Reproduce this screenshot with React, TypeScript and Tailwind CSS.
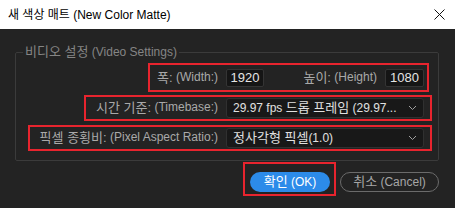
import React from "react";

const RED = "border-[#e8242e]";

const Ko = ({ children, className = "text-[13px]" }: { children: React.ReactNode; className?: string }) => (
  <span className={className}>{children}</span>
);

const Chevron = () => (
  <svg width="9" height="6" viewBox="0 0 9 6" className="shrink-0">
    <path d="M1 1 L4.5 4.5 L8 1" fill="none" stroke="#a0a0a0" strokeWidth="1" />
  </svg>
);

const NumberBox = ({ value, width }: { value: string; width: string }) => (
  <div
    className={`${width} h-[18px] bg-[#151515] border border-[#343434] rounded-[2px] flex items-center justify-center text-[13px] text-[#e4e4e4]`}
  >
    {value}
  </div>
);

const Dropdown = ({ children }: { children: React.ReactNode }) => (
  <div className="w-[198px] h-[20px] bg-[#181818] border border-[#303030] rounded-[3px] flex items-center justify-between pl-[6px] pr-[6px] text-[#e0e0e0]">
    <span className="whitespace-nowrap overflow-hidden leading-[18px]">{children}</span>
    <Chevron />
  </div>
);

export default function App() {
  return (
    <div className="w-[455px] h-[208px] bg-[#232323] flex flex-col overflow-hidden font-['Liberation_Sans','Noto_Sans_CJK_KR',sans-serif] text-[12px]">
      {/* title bar */}
      <div className="h-[29px] bg-white flex items-center justify-between pl-[8px] pr-[10px] shrink-0">
        <span className="text-[12px] text-black">새 색상 매트 (New Color Matte)</span>
        <svg width="11" height="11" viewBox="0 0 11 11">
          <path d="M0.5 0.5 L10.5 10.5 M10.5 0.5 L0.5 10.5" stroke="#111" strokeWidth="1" />
        </svg>
      </div>

      <div className="pl-[15px] pr-[16px] pt-[15px]">
        <fieldset className="border border-[#3b3b3b] rounded-[2px] pb-[9px]">
          <legend className="ml-[7px] px-[2px] leading-[16px] text-[#858585]">
            <Ko>비디오 설정</Ko> (Video Settings)
          </legend>

          {/* width / height */}
          <div className={`ml-[132px] mt-[3px] w-[281px] h-[29px] border-2 ${RED} flex items-center text-[#a9a9a9]`}>
            <div className="w-[68px] flex justify-end whitespace-nowrap">
              <Ko>폭:</Ko>&nbsp;(Width:)
            </div>
            <div className="ml-[8px]">
              <NumberBox value="1920" width="w-[38px]" />
            </div>
            <div className="w-[121px] flex justify-end pr-[8px] whitespace-nowrap">
              <Ko>높이:</Ko>&nbsp;(Height)
            </div>
            <NumberBox value="1080" width="w-[39px]" />
          </div>

          {/* timebase */}
          <div className={`ml-[68px] mt-[3px] w-[348px] h-[26px] border-2 ${RED} flex items-center text-[#a9a9a9]`}>
            <div className="w-[132px] flex justify-end whitespace-nowrap">
              <Ko>시간 기준:</Ko>&nbsp;(Timebase:)
            </div>
            <div className="ml-[8px]">
              <Dropdown>
                29.97 fps <Ko>드롭 프레임</Ko> (29.97...
              </Dropdown>
            </div>
          </div>

          {/* pixel aspect ratio */}
          <div className={`ml-[12px] mt-[4px] w-[404px] h-[26px] border-2 ${RED} flex items-center text-[#a9a9a9]`}>
            <div className="w-[188px] flex justify-end whitespace-nowrap">
              <Ko>픽셀 종횡비:</Ko>&nbsp;(Pixel Aspect Ratio:)
            </div>
            <div className="ml-[8px]">
              <Dropdown>
                <Ko>정사각형 픽셀</Ko>(1.0)
              </Dropdown>
            </div>
          </div>
        </fieldset>
      </div>

      {/* buttons */}
      <div className="mt-[1px] flex justify-end items-start pr-[16px]">
        <div className={`w-[93px] h-[34px] border-2 ${RED} pt-[8px] pl-[5px]`}>
          <button className="w-[80px] h-[20px] rounded-full bg-[#2c8be9] text-white flex items-center justify-center whitespace-nowrap">
            <Ko>확인</Ko>&nbsp;(OK)
          </button>
        </div>
        <button className="ml-[4px] mt-[10px] w-[99px] h-[20px] rounded-full border border-[#6b6b6b] text-[#a6a6a6] flex items-center justify-center whitespace-nowrap">
          <Ko>취소</Ko>&nbsp;(Cancel)
        </button>
      </div>
    </div>
  );
}
